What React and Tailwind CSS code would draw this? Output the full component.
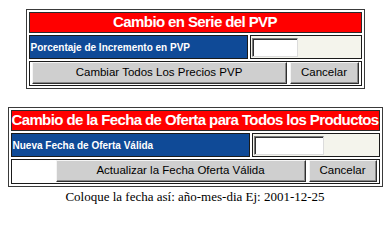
import React from 'react';

const sans = { fontFamily: '"Liberation Sans", Arial, sans-serif' };

function Btn({ children, className = '' }) {
  return (
    <button
      type="button"
      className={`h-[22px] bg-[#cfcfcf] border border-t-[#f4f4f4] border-l-[#f4f4f4] border-r-[#303030] border-b-[#303030] shadow-[inset_-1px_-1px_0_#8a8a8a] text-[11.5px] text-black leading-none ${className}`}
      style={sans}
    >
      {children}
    </button>
  );
}

function Panel({ width, title, label, labelW, inputW, mainBtn, mainW, padL, cancelW }) {
  return (
    <div className={`mx-auto ${width} border border-[#3a3a3a] bg-white p-[2px] flex flex-col gap-[2px]`}>
      <div
        className="h-[21px] bg-[#ff0000] border border-[#2a2a2a] flex items-center justify-center text-white font-bold text-[15px] tracking-[-0.6px] whitespace-nowrap"
        style={sans}
      >
        {title}
      </div>
      <div className="h-[24px] flex gap-[2px]">
        <div
          className={`${labelW} bg-[#0f4a97] border border-[#1a1a1a] flex items-center pl-[1px] text-white font-bold text-[10px] whitespace-nowrap`}
          style={sans}
        >
          {label}
        </div>
        <div className="flex-1 bg-[#f4f4ec] border border-[#1a1a1a] flex items-center pl-[1px]">
          <input
            type="text"
            className={`${inputW} h-[19px] bg-white border border-t-[#7a7a7a] border-l-[#7a7a7a] border-r-[#dcdcdc] border-b-[#dcdcdc] shadow-[inset_1px_1px_0_#303030] outline-none`}
          />
        </div>
      </div>
      <div className={`h-[25px] border border-[#1a1a1a] bg-white flex items-start pt-[0px] pr-[2px] gap-[3px] ${padL}`}>
        <Btn className={mainW}>{mainBtn}</Btn>
        <Btn className={cancelW}>Cancelar</Btn>
      </div>
    </div>
  );
}

export default function App() {
  return (
    <div className="w-[390px] h-[213px] bg-white pt-[9px] overflow-hidden">
      <Panel
        width="w-[339px]"
        title="Cambio en Serie del PVP"
        label="Porcentaje de Incremento en PVP"
        labelW="w-[219px]"
        inputW="w-[46px]"
        mainBtn="Cambiar Todos Los Precios PVP"
        mainW="w-[255px]"
        padL="pl-[2px]"
        cancelW="flex-1"
      />
      <div className="h-[18px]" />
      <Panel
        width="w-[375px]"
        title="Cambio de la Fecha de Oferta para Todos los Productos"
        label="Nueva Fecha de Oferta Válida"
        labelW="w-[239px]"
        inputW="w-[70px]"
        mainBtn="Actualizar la Fecha Oferta Válida"
        mainW="w-[250px]"
        padL="pl-[44px]"
        cancelW="flex-1"
      />
      <p
        className="mt-[2px] text-center text-[13px] leading-[15px] text-black"
        style={{ fontFamily: '"Liberation Serif", "Times New Roman", serif' }}
      >
        Coloque la fecha así: año-mes-dia Ej: 2001-12-25
      </p>
    </div>
  );
}
